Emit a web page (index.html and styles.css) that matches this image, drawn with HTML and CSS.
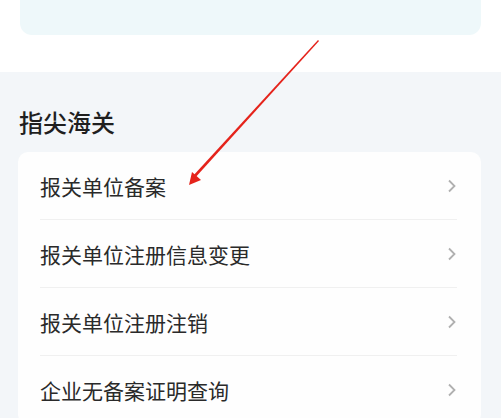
FILE: index.html
```html
<!DOCTYPE html>
<html lang="zh-CN">
<head>
    <meta charset="UTF-8">
    <meta name="viewport" content="width=device-width, initial-scale=1.0">
    <title>指尖海关</title>
    <link rel="stylesheet" href="styles.css">
</head>
<body>
    <div class="top">
        <div class="banner"></div>
    </div>

    <div class="section">
        <h2>指尖海关</h2>

        <div class="card">
            <div class="row">
                <span>报关单位备案</span>
                <svg class="chevron" width="10" height="14" viewBox="0 0 10 14"><path d="M2 1.5 L7.5 7 L2 12.5" /></svg>
            </div>
            <div class="row">
                <span>报关单位注册信息变更</span>
                <svg class="chevron" width="10" height="14" viewBox="0 0 10 14"><path d="M2 1.5 L7.5 7 L2 12.5" /></svg>
            </div>
            <div class="row">
                <span>报关单位注册注销</span>
                <svg class="chevron" width="10" height="14" viewBox="0 0 10 14"><path d="M2 1.5 L7.5 7 L2 12.5" /></svg>
            </div>
            <div class="row">
                <span>企业无备案证明查询</span>
                <svg class="chevron" width="10" height="14" viewBox="0 0 10 14"><path d="M2 1.5 L7.5 7 L2 12.5" /></svg>
            </div>
        </div>
    </div>

    <!-- red annotation arrow drawn over the page -->
    <svg class="arrow" width="501" height="418" viewBox="0 0 501 418">
        <polygon points="318,40 319,41 194,179 192,177" fill="#e5231b" />
        <polygon points="189,185 192,172 201,180" fill="#e5231b" />
    </svg>
</body>
</html>
```

FILE: styles.css
```css
body {
    margin: 0;
    width: 501px;
    height: 418px;
    overflow: hidden;
    position: relative;
    font-family: "Noto Sans CJK SC", "Noto Sans", sans-serif;
    background: #f3f6f9;
    color: #333;
}

.top {
    background: white;
    height: 72px;
    padding: 0 20px;
}

.banner {
    height: 35px;
    background: #eef8fa;
    border-radius: 0 0 12px 12px;
}

.section {
    padding: 34px 20px 0 18px;
}

h2 {
    margin: 0 0 14px 1px;
    font-size: 24px;
    line-height: 32px;
    font-weight: 500;
    color: #1f1f1f;
}

.card {
    background: #fefefe;
    border-radius: 10px;
    padding: 0 24px 0 22px;
}

.row {
    height: 67px;
    display: flex;
    align-items: center;
    justify-content: space-between;
    border-bottom: 1px solid #f0f0f0;
    font-size: 21px;
    color: #2a2a2a;
}

.chevron {
    fill: none;
    stroke: #b0b0b0;
    stroke-width: 1.8;
}

.arrow {
    position: absolute;
    left: 0;
    top: 0;
}
```
